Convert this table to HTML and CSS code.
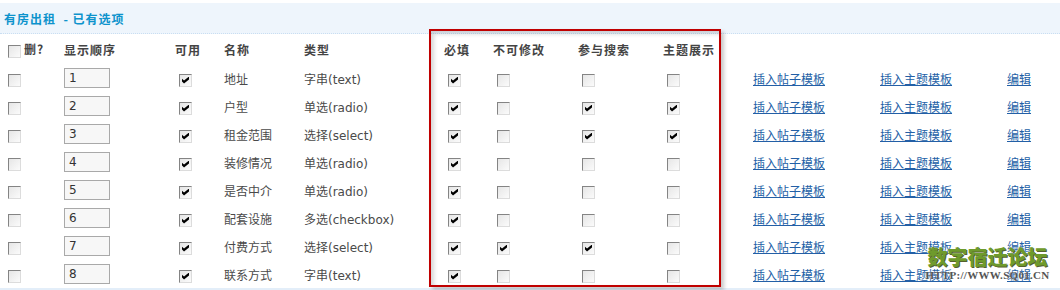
FILE: index.html
```html
<!DOCTYPE html>
<html lang="zh">
<head>
<meta charset="utf-8">
<title>有房出租 - 已有选项</title>
<link rel="stylesheet" href="styles.css">
</head>
<body>
<div class="page">
  <div class="title-band"><span class="title">有房出租 &nbsp;- 已有选项</span></div>
  <table class="opts">
    <colgroup>
      <col class="w-del"><col class="w-order"><col class="w-avail"><col class="w-name"><col class="w-type">
      <col class="w-req"><col class="w-ro"><col class="w-search"><col class="w-topic">
      <col class="w-l1"><col class="w-l2"><col class="w-edit">
    </colgroup>
    <thead>
      <tr class="head">
        <th><span class="cb"></span><span class="del">删?</span></th>
        <th>显示顺序</th><th>可用</th><th>名称</th><th>类型</th>
        <th>必填</th><th>不可修改</th><th>参与搜索</th><th>主题展示</th>
        <th></th><th></th><th></th>
      </tr>
    </thead>
    <tbody>
      <tr><td><span class="cb"></span></td><td><span class="num">1</span></td><td><span class="cb on"></span></td><td>地址</td><td>字串(text)</td><td><span class="cb on"></span></td><td><span class="cb"></span></td><td><span class="cb"></span></td><td><span class="cb"></span></td><td><a href="#">插入帖子模板</a></td><td><a href="#">插入主题模板</a></td><td><a href="#">编辑</a></td></tr>
      <tr><td><span class="cb"></span></td><td><span class="num">2</span></td><td><span class="cb on"></span></td><td>户型</td><td>单选(radio)</td><td><span class="cb on"></span></td><td><span class="cb"></span></td><td><span class="cb on"></span></td><td><span class="cb on"></span></td><td><a href="#">插入帖子模板</a></td><td><a href="#">插入主题模板</a></td><td><a href="#">编辑</a></td></tr>
      <tr><td><span class="cb"></span></td><td><span class="num">3</span></td><td><span class="cb on"></span></td><td>租金范围</td><td>选择(select)</td><td><span class="cb on"></span></td><td><span class="cb"></span></td><td><span class="cb on"></span></td><td><span class="cb on"></span></td><td><a href="#">插入帖子模板</a></td><td><a href="#">插入主题模板</a></td><td><a href="#">编辑</a></td></tr>
      <tr><td><span class="cb"></span></td><td><span class="num">4</span></td><td><span class="cb on"></span></td><td>装修情况</td><td>单选(radio)</td><td><span class="cb on"></span></td><td><span class="cb"></span></td><td><span class="cb"></span></td><td><span class="cb"></span></td><td><a href="#">插入帖子模板</a></td><td><a href="#">插入主题模板</a></td><td><a href="#">编辑</a></td></tr>
      <tr><td><span class="cb"></span></td><td><span class="num">5</span></td><td><span class="cb on"></span></td><td>是否中介</td><td>单选(radio)</td><td><span class="cb on"></span></td><td><span class="cb"></span></td><td><span class="cb"></span></td><td><span class="cb"></span></td><td><a href="#">插入帖子模板</a></td><td><a href="#">插入主题模板</a></td><td><a href="#">编辑</a></td></tr>
      <tr><td><span class="cb"></span></td><td><span class="num">6</span></td><td><span class="cb on"></span></td><td>配套设施</td><td>多选(checkbox)</td><td><span class="cb on"></span></td><td><span class="cb"></span></td><td><span class="cb"></span></td><td><span class="cb"></span></td><td><a href="#">插入帖子模板</a></td><td><a href="#">插入主题模板</a></td><td><a href="#">编辑</a></td></tr>
      <tr><td><span class="cb"></span></td><td><span class="num">7</span></td><td><span class="cb on"></span></td><td>付费方式</td><td>选择(select)</td><td><span class="cb on"></span></td><td><span class="cb on"></span></td><td><span class="cb on"></span></td><td><span class="cb"></span></td><td><a href="#">插入帖子模板</a></td><td><a href="#">插入主题模板</a></td><td><a href="#">编辑</a></td></tr>
      <tr><td><span class="cb"></span></td><td><span class="num">8</span></td><td><span class="cb on"></span></td><td>联系方式</td><td>字串(text)</td><td><span class="cb on"></span></td><td><span class="cb"></span></td><td><span class="cb"></span></td><td><span class="cb"></span></td><td><a href="#">插入帖子模板</a></td><td><a href="#">插入主题模板</a></td><td><a href="#">编辑</a></td></tr>
    </tbody>
  </table>
  <div class="foot-band"></div>

  <div class="highlight"></div>
  <div class="watermark">
    <div class="wm-cn">数字宿迁论坛</div>
    <div class="wm-url">HTTP://WWW.SQ01.CN</div>
  </div>
</div>
</body>
</html>
```

FILE: styles.css
```css
html, body {
  margin: 0;
  padding: 0;
  background: #ffffff;
}

body {
  font-family: "DejaVu Sans", "Noto Sans CJK SC", sans-serif;
  font-size: 12px;
  color: #4a4a4a;
}

.page {
  position: relative;
  width: 1060px;
  height: 290px;
  overflow: hidden;
}

.title-band {
  margin-top: 3px;
  height: 30px;
  background: #eef5fc;
  border-bottom: 1px dotted #c9def2;
  display: flex;
  align-items: center;
  padding-left: 4px;
}

.title {
  font-family: "Noto Sans CJK SC", sans-serif;
  font-weight: bold;
  font-size: 12px;
  letter-spacing: 1px;
  color: #0d93cc;
}

.opts {
  width: 1060px;
  table-layout: fixed;
  border-collapse: collapse;
  border-spacing: 0;
}

.w-del { width: 60px; }
.w-order { width: 111px; }
.w-avail { width: 49px; }
.w-name { width: 80px; }
.w-type { width: 140px; }
.w-req { width: 49px; }
.w-ro { width: 85px; }
.w-search { width: 85px; }
.w-topic { width: 90px; }
.w-l1 { width: 127px; }
.w-l2 { width: 127px; }
.w-edit { width: 57px; }

.opts th,
.opts td {
  padding: 0 0 0 4px;
  text-align: left;
  vertical-align: middle;
  white-space: nowrap;
}

.opts td {
  height: 28px;
  font-family: "Noto Sans CJK SC", "DejaVu Sans", sans-serif;
}

.opts td:nth-child(5) {
  font-family: "DejaVu Sans", "Noto Sans CJK SC", sans-serif;
}

.head th {
  height: 30px;
  font-family: "Noto Sans CJK SC", sans-serif;
  font-weight: bold;
  font-size: 12px;
  letter-spacing: 1px;
  color: #444444;
}

.del {
  margin-left: 3px;
}

.cb {
  display: inline-block;
  position: relative;
  box-sizing: border-box;
  width: 13px;
  height: 13px;
  margin-left: 4px;
  vertical-align: middle;
  border: 1px solid;
  border-color: #848484 #dcdcdc #dcdcdc #848484;
  background: linear-gradient(135deg, #e6e6e6 0%, #fbfbfb 100%);
}

.cb.on::after {
  content: "";
  position: absolute;
  left: 2px;
  top: 2px;
  width: 7px;
  height: 7px;
  background: #000000;
  clip-path: polygon(0 29%, 29% 57%, 100% 0, 100% 43%, 29% 100%, 0 71%);
}

.num {
  display: inline-block;
  box-sizing: border-box;
  width: 46px;
  height: 20px;
  line-height: 18px;
  padding-left: 4px;
  border: 1px solid #a9a9a9;
  background: #f7f7f7;
  font-family: "DejaVu Sans", sans-serif;
  font-size: 12px;
  color: #333333;
  vertical-align: middle;
}

.opts a {
  color: #235fa6;
  text-decoration: underline;
}

.foot-band {
  height: 4px;
  background: #e3eef9;
}

.highlight {
  position: absolute;
  left: 429px;
  top: 29px;
  width: 292px;
  height: 258px;
  box-sizing: border-box;
  border: 2px solid #c00000;
  box-shadow: 3px 3px 4px rgba(0, 0, 0, 0.22), inset 3px 3px 4px rgba(0, 0, 0, 0.16);
  pointer-events: none;
}

.watermark {
  position: absolute;
  left: 920px;
  top: 247px;
  width: 135px;
  text-align: center;
  pointer-events: none;
}

.wm-cn {
  font-family: "Noto Sans CJK SC", sans-serif;
  font-weight: 900;
  font-size: 20px;
  line-height: 20px;
  color: #6e9a2c;
  letter-spacing: 0;
  text-shadow: 1px 1px 0 #55602f, 0 0 2px #ffffff;
}

.wm-url {
  font-family: "Liberation Serif", serif;
  font-weight: bold;
  font-size: 11px;
  line-height: 12px;
  margin-top: 2px;
  color: #555555;
  letter-spacing: 0.3px;
  text-shadow: 0 0 2px #ffffff;
}
```
